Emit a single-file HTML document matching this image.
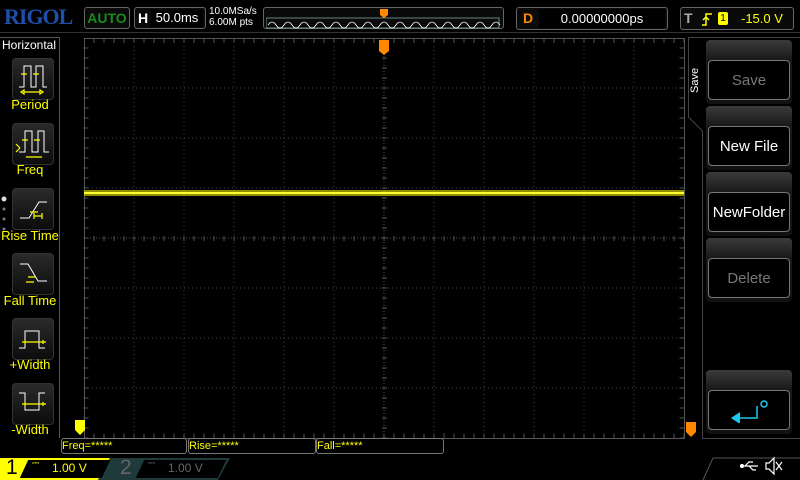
<!DOCTYPE html><html><head><style>
body{margin:0;width:800px;height:480px;background:#000;overflow:hidden;font-family:"Liberation Sans",sans-serif;position:relative}
.a{position:absolute}
.box{position:absolute;border:1px solid #555;border-radius:3px;background:#0a0a0a}
.lbl{position:absolute;color:#ff0;font-size:13px;text-align:center;left:0;width:60px}
.ib{position:absolute;left:12px;width:40px;height:40px;border:1px solid #333;border-radius:4px;background:linear-gradient(#2a2a2a,#0c0c0c)}
.rb{position:absolute;left:706px;width:86px;height:64px;border-radius:4px;background:linear-gradient(#3a3a3a,#1a1a1a 30%,#111)}
.rb div{position:absolute;left:2px;right:2px;top:20px;bottom:4px;border:1px solid #777;border-radius:4px;background:#000;color:#fff;font-size:15px;text-align:center;line-height:40px}
</style></head><body>
<div class="a" style="left:4px;top:4px;font-family:'Liberation Serif',serif;font-weight:bold;font-size:22px;color:#1f4fa8;letter-spacing:-1px">RIGOL</div>
<div class="box" style="left:84px;top:7px;width:44px;height:20px;color:#1a8a1a;font-size:14px;font-weight:bold;text-align:center;line-height:20px;border-color:#666">AUTO</div>
<div class="box" style="left:134px;top:7px;width:70px;height:20px;border-color:#666"><span class="a" style="left:3px;top:2px;color:#fff;font-weight:bold;font-size:14px">H</span><span class="a" style="left:16px;top:1px;width:52px;height:18px;background:#000;color:#fff;font-size:13px;line-height:18px;text-align:center">50.0ms</span></div>
<div class="a" style="left:209px;top:6px;color:#fff;font-size:10px;line-height:11px">10.0MSa/s<br>6.00M pts</div>
<div class="box" style="left:263px;top:7px;width:239px;height:20px;border-color:#666"></div>
<svg class="a" style="left:266px;top:9px" width="236" height="20"><path d="M0 9 L0 19 L233 19 L233 9 Z" fill="none" stroke="#8aa" stroke-width="0.8"/><path d="M2 16 q4 -6 8 0 t8 0 t8 0 t8 0 t8 0 t8 0 t8 0 t8 0 t8 0 t8 0 t8 0 t8 0 t8 0 t8 0 t8 0 t8 0 t8 0 t8 0 t8 0 t8 0 t8 0 t8 0 t8 0 t8 0 t8 0 t8 0 t8 0 t8 0 t8 0" fill="none" stroke="#fff" stroke-width="0.8"/><path d="M114 0 h8 v6 l-4 3 l-4 -3z" fill="#f80"/></svg>
<div class="box" style="left:516px;top:7px;width:150px;height:21px;border-color:#666"><span class="a" style="left:6px;top:2px;color:#f80;font-weight:bold;font-size:14px">D</span><span class="a" style="left:22px;top:1px;width:126px;height:19px;background:#000;color:#fff;font-size:13px;text-align:center;line-height:19px">0.00000000ps</span></div>
<div class="box" style="left:680px;top:7px;width:112px;height:21px;border-color:#666"><span class="a" style="left:3px;top:2px;color:#aaa;font-weight:bold;font-size:14px">T</span><svg class="a" style="left:20px;top:4px" width="12" height="14"><path d="M1 13h4V2h6M2 8l3-3l3 3" fill="none" stroke="#ff0" stroke-width="1.5"/></svg><span class="a" style="left:37px;top:4px;width:10px;height:13px;background:#ff0;border-radius:2px;color:#000;font-size:10px;text-align:center;line-height:13px">1</span><span class="a" style="left:60px;top:3px;color:#ff0;font-size:13px">-15.0 V</span></div>
<div class="a" style="left:0;top:32px;width:800px;height:1px;background:#333"></div>
<div class="a" style="left:0;top:37px;width:59px;height:400px;border-right:1px solid #555;border-top:1px solid #555"></div>
<div class="a" style="left:2px;top:38px;color:#fff;font-size:12px">Horizontal</div>
<div class="ib" style="top:58px"></div><div class="lbl" style="top:97px">Period</div>
<div class="ib" style="top:123px"></div><div class="lbl" style="top:162px">Freq</div>
<div class="ib" style="top:188px"></div><div class="lbl" style="top:228px">Rise Time</div>
<div class="ib" style="top:253px"></div><div class="lbl" style="top:293px">Fall Time</div>
<div class="ib" style="top:318px"></div><div class="lbl" style="top:357px">+Width</div>
<div class="ib" style="top:383px"></div><div class="lbl" style="top:422px">-Width</div>
<svg class="a" style="left:0;top:0" width="800" height="480">
<g fill="none" stroke="#fff" stroke-width="1"><path d="M19 87h5V66h7v21h5V66h7v21h4"/><path d="M19 152h6V131h7v21h6V131h6v21h5"/><path d="M20 218h9l10-16h8"/><path d="M20 264h8l10 17h9"/><path d="M19 348h6v-17h14v17h6"/><path d="M19 393h6v17h14v-17h6"/></g>
<g fill="none" stroke="#ff0" stroke-width="1.2"><path d="M21 74h6M33 74h6M24 92h16M21 92l3-2v4zM43 92l-3-2v4z"/><path d="M22 140h6M34 140h6M26 157h16M16 144l4 4M16 152l4-4"/><path d="M30 212h8M34 216h8M34 213v6M42 213v6"/><path d="M28 277h8M26 282h8"/><path d="M22 342h24M25 340v4M43 340v4"/><path d="M22 404h24M25 402v4M43 402v4"/></g>
<circle cx="4" cy="199" r="2.5" fill="#ddd"/><circle cx="4" cy="209" r="1.5" fill="#777"/><circle cx="4" cy="219" r="1.5" fill="#777"/><circle cx="4" cy="229" r="1.5" fill="#777"/>
<g stroke="#444" stroke-dasharray="1 3"><path d="M134 38v400M184 38v400M234 38v400M284 38v400M334 38v400M434 38v400M484 38v400M534 38v400M584 38v400M634 38v400M84 88h600M84 138h600M84 188h600M84 288h600M84 338h600M84 388h600"/></g>
<path d="M384 38v400M84 238h600" stroke="#555" stroke-dasharray="1 2"/>
<g stroke="#555" stroke-dasharray="1 9"><path d="M84.5 40.5h600" stroke-width="5" stroke-dashoffset="-9"/><path d="M84.5 436h600" stroke-width="5" stroke-dashoffset="-9"/><path d="M86 38.5v400" stroke-width="5" stroke-dashoffset="-9"/><path d="M682 38.5v400" stroke-width="5" stroke-dashoffset="-9"/><path d="M84.5 238.5h600" stroke-width="5" stroke-dashoffset="-9"/><path d="M384.5 38.5v400" stroke-width="5" stroke-dashoffset="-9"/></g>
<rect x="84.5" y="38.5" width="600" height="400" fill="none" stroke="#555"/>
<path d="M84 193h600" stroke="#cc0" stroke-width="6" opacity="0.7"/><path d="M84 193h600" stroke="#ff3" stroke-width="2"/>
<path d="M688.5 37.5h112M688.5 37v80l14 14v307.5h98" fill="none" stroke="#444"/>
<path d="M379 40h10v11l-5 4l-5-4z" fill="#f80"/><path d="M75 420h10v10l-5 5l-5-5z" fill="#ff0"/><path d="M686 422h10v10l-5 5l-5-5z" fill="#f80"/>
<path d="M0 458h110l-12 22H0z" fill="#ff0"/><path d="M110 458h120l-12 22H98z" fill="#1e3a3a"/>
<path d="M703 480l10-22h87" fill="none" stroke="#555"/>
<g fill="none" stroke="#fff" stroke-width="1.2"><path d="M742 466h16M745 466l4-4h4M749 466l4 4h3"/><circle cx="742" cy="466" r="1.5" fill="#fff"/><path d="M766 463h3l5-5v16l-5-5h-3z"/><path d="M776 462l6 8M782 462l-6 8"/></g>
</svg>
<div class="a" style="left:689px;top:93px;color:#fff;font-size:11px;transform:rotate(-90deg);transform-origin:left top">Save</div>
<div class="rb" style="top:40px"><div style="color:#777">Save</div></div>
<div class="rb" style="top:106px"><div>New File</div></div>
<div class="rb" style="top:172px"><div>NewFolder</div></div>
<div class="rb" style="top:238px"><div style="color:#777">Delete</div></div>
<div class="rb" style="top:370px"><div></div></div>
<svg class="a" style="left:731px;top:399px" width="40" height="24"><path d="M1 19h25v-12" fill="none" stroke="#1ac8f0" stroke-width="1.5"/><path d="M0 19l9-6v12z" fill="#1ac8f0"/><circle cx="33" cy="5" r="3" fill="none" stroke="#1ac8f0" stroke-width="1.5"/></svg>
<div class="box" style="left:61px;top:438px;width:124px;height:14px;border-color:#777;background:#000;color:#ff0;font-size:11px;line-height:14px">Freq=*****</div>
<div class="box" style="left:188px;top:438px;width:126px;height:14px;border-color:#777;background:#000;color:#ff0;font-size:11px;line-height:14px">Rise=*****</div>
<div class="box" style="left:316px;top:438px;width:126px;height:14px;border-color:#777;background:#000;color:#ff0;font-size:11px;line-height:14px">Fall=*****</div>
<div class="a" style="left:24px;top:460px;width:82px;height:18px;background:#000;transform:skewX(-25deg)"></div>
<div class="a" style="left:6px;top:456px;color:#000;font-size:21px">1</div>
<div class="a" style="left:32px;top:458px;color:#ff0;font-size:9px">⎓</div>
<div class="a" style="left:52px;top:461px;color:#ff0;font-size:12px">1.00 V</div>
<div class="a" style="left:140px;top:460px;width:82px;height:18px;background:#000;transform:skewX(-25deg)"></div>
<div class="a" style="left:120px;top:456px;color:#666;font-size:21px">2</div>
<div class="a" style="left:148px;top:458px;color:#666;font-size:9px">⎓</div>
<div class="a" style="left:168px;top:461px;color:#666;font-size:12px">1.00 V</div>
</body></html>
